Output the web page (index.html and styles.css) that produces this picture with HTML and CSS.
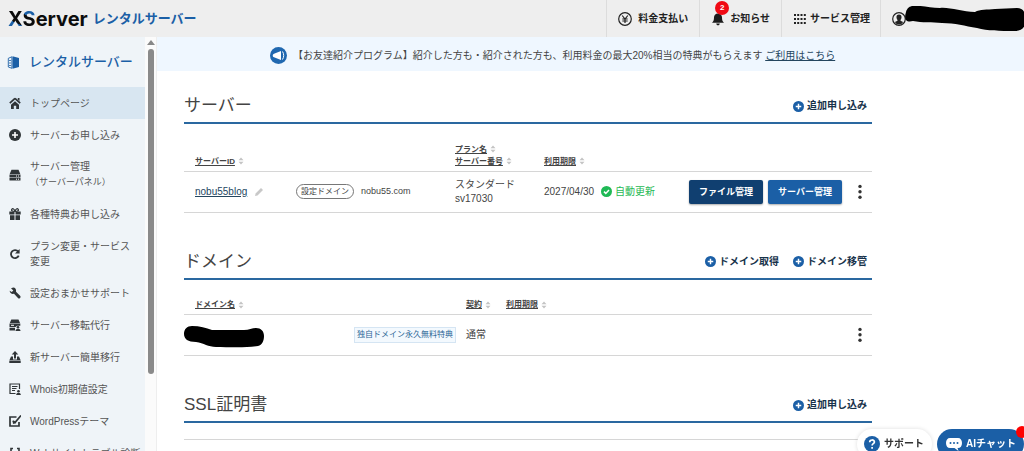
FILE: index.html
```html
<!DOCTYPE html>
<html lang="ja">
<head>
<meta charset="utf-8">
<title>XServer レンタルサーバー</title>
<link rel="stylesheet" href="styles.css">
</head>
<body>
<svg class="defs" aria-hidden="true">
  <symbol id="plus" viewBox="0 0 12 12"><circle cx="6" cy="6" r="6" fill="currentColor"/><path d="M6 3v6M3 6h6" stroke="#fff" stroke-width="1.6"/></symbol>
  <symbol id="sort" viewBox="0 0 6 8"><path d="M.5 3.2 3 .4l2.5 2.8zM.5 4.8 3 7.6l2.5-2.8z" fill="#c4c4c4"/></symbol>
  <symbol id="dots" viewBox="0 0 4 16"><circle cx="2" cy="2.4" r="1.7"/><circle cx="2" cy="7.8" r="1.7"/><circle cx="2" cy="13.2" r="1.7"/></symbol>
</svg>

<header class="topbar">
  <a class="logo" href="#"><span class="logo-name"><span class="logo-x">X</span><span class="logo-s">S</span>erver</span><span class="logo-sub">レンタルサーバー</span></a>
  <nav class="topnav">
    <a class="topnav-item" href="#">
      <svg class="icon-14" viewBox="0 0 14 14" fill="none" stroke="#222"><circle cx="7" cy="7" r="6.3" stroke-width="1.2"/><path d="M4.2 3.5 7 7l2.8-3.5M7 7v4M4.3 7h5.4M4.3 9h5.4" stroke-width="1.2"/></svg>
      <span>料金支払い</span></a>
    <a class="topnav-item notice" href="#">
      <svg class="icon-14" viewBox="0 0 14 14" fill="#1c1c1c"><path d="M7 1.5c2.6 0 4 1.7 4 4 0 2.800.6 3.800 2 5.300H1c1.400-1.500 2-2.500 2-5.300 0-2.300 1.400-4 4-4zM5.200 11.600h3.600a1.800 1.800 0 0 1-3.600 0z"/></svg>
      <span>お知らせ</span><span class="notice-count">2</span></a>
    <a class="topnav-item services" href="#">
      <svg class="icon-12" viewBox="0 0 12 12" fill="#222"><path d="M0 1h2v2H0zM3.200 1h2v2h-2zM6.500 1h2v2h-2zM9.800 1h2v2h-2zM0 5h2v2H0zM3.200 5h2v2h-2zM6.500 5h2v2h-2zM9.800 5h2v2h-2zM0 9h2v2H0zM3.200 9h2v2h-2zM6.500 9h2v2h-2zM9.800 9h2v2h-2z"/></svg>
      <span>サービス管理</span></a>
    <a class="topnav-item account" href="#" aria-label="アカウント">
      <svg class="icon-14" viewBox="0 0 14 14"><circle cx="7" cy="7" r="6.300" fill="none" stroke="#222" stroke-width="1.200"/><path d="M7 2.500c1.800 0 2.700 1.300 2.500 3-.1 1.200-.6 1.900-1 2.400v.9l2.600 1.200C10.200 11.700 8.700 12.500 7 12.500s-3.200-.8-4.100-2.500l2.600-1.200v-.9c-.4-.5-.9-1.200-1-2.400C4.300 3.800 5.200 2.500 7 2.500z" fill="#222"/></svg>
      <svg class="account-mask" viewBox="0 0 120 26"><path d="M8 0C16-1 25 2 35 2c10-1 22 4 35 4 5-3 12-2 20-3l22-1c5 0 8 3 8 8v8c-1 5-5 7-10 7-16 0-27 0-38-3-12-2-22-5-35-5-10-1-20 0-29-2C0 17-1 12 1 6c1-4 4-6 7-6z"/></svg>
    </a>
  </nav>
</header>

<div class="layout">
  <aside class="sidebar">
    <a class="sidebar-title" href="#">
      <svg class="icon-13" viewBox="0 0 12 13"><path d="M5 .3 11.500 2v9L5 12.800z" fill="#1b5fa6"/><path d="M4.400.8v11.500L.8 11V2.300z" fill="none" stroke="#1b5fa6" stroke-width=".9"/><path d="M1.500 4.500h2M1.500 7h2M1.500 9.500h2" stroke="#1b5fa6" stroke-width=".8"/></svg>
      <span>レンタルサーバー</span></a>
    <nav class="menu">
      <a class="menu-item active" href="#"><svg class="icon-12" viewBox="0 0 12 12"><path d="M6 1.300.8 6.200M6 1.300l5.200 4.900" stroke="currentColor" stroke-width="1.700" fill="none"/><path d="M6 4.200 2 7.800V12h2.800V8.700h2.400V12H10V7.800zM8.800 1h1.700v3L8.800 2.500z"/></svg><span>トップページ</span></a>
      <a class="menu-item" href="#"><svg class="icon-12"><use href="#plus"/></svg><span>サーバーお申し込み</span></a>
      <a class="menu-item tall" href="#"><svg class="icon-12" viewBox="0 0 12 12"><path d="M2.500.8h7l1.800 4.200H.7zM.5 5.600h11v2.600H.5zM.5 8.800h11v2.700H.5z"/><path d="M7 7h1M9 7h1M7 10.200h1M9 10.200h1" stroke="#fff"/></svg><span>サーバー管理<small>（サーバーパネル）</small></span></a>
      <a class="menu-item" href="#"><svg class="icon-12" viewBox="0 0 12 12"><path d="M.3 3.500h5.200v3H.3zM6.500 3.500h5.200v3H6.500zM1 7.200h4.500V12H1zM6.500 7.200H11V12H6.500z"/><path d="M6 3.500C3 3.500 2 2.500 2.800 1.300S5.600 1 6 3.500c.4-2.500 2.400-3.400 3.200-2.200S9 3.500 6 3.500z" fill="none" stroke="currentColor" stroke-width="1.200"/></svg><span>各種特典お申し込み</span></a>
      <a class="menu-item tall" href="#"><svg class="icon-12" viewBox="0 0 12 12"><path d="M9.200 3.700a4 4 0 1 0 .5 4" fill="none" stroke="currentColor" stroke-width="1.800"/><path d="M10.600 1v4.600H6z"/></svg><span>プラン変更・サービス変更</span></a>
      <a class="menu-item" href="#"><svg class="icon-12" viewBox="0 0 12 12"><path d="M2 1.200 4.300.6C6.500.8 7.400 2.600 7 4.700l4.300 4.400c.9 1.300-.8 3-2.100 2.100L5 6.800C2.800 7.400.8 6 .6 3.700l2.200 1.400L4.300 3.600z"/></svg><span>設定おまかせサポート</span></a>
      <a class="menu-item" href="#"><svg class="icon-12" viewBox="0 0 12 12"><path d="M2.300.5h7.200l1.500 3.500H.8zM.5 4.600h10.800v2.200H8L6.500 8H.5zM.5 8.700H6v2.800H.5z"/><circle cx="9" cy="8.300" r="1.300"/><path d="M6.500 12c0-3 5-3 5 0z"/><path d="M2 6.300h3" stroke="#fff"/></svg><span>サーバー移転代行</span></a>
      <a class="menu-item" href="#"><svg class="icon-12" viewBox="0 0 12 12"><path d="M6 0 9.300 3.500H7V7.500H5V3.500H2.700zM2 5.500h2v3h4v-3h2L11.500 9H.5zM.3 9.500h11.400V12H.3z"/></svg><span>新サーバー簡単移行</span></a>
      <a class="menu-item" href="#"><svg class="icon-12" viewBox="0 0 12 12"><path d="M6.500 10.500H1V1h9.500v5M3 3.500h5.500M3 5.500h4.500M3 7.500h3" fill="none" stroke="currentColor" stroke-width="1.200"/><circle cx="9.500" cy="8.200" r="1.300"/><path d="M7.200 12c0-3 4.600-3 4.600 0z"/></svg><span>Whois初期値設定</span></a>
      <a class="menu-item" href="#"><svg class="icon-12" viewBox="0 0 12 12"><path d="M7.500 2H1v9h9V7" fill="none" stroke="currentColor" stroke-width="1.700"/><path d="m4 6 2 1.500L12 .5" fill="none" stroke="currentColor" stroke-width="1.700"/><path d="M3.500 5.500 4 9l3-1z"/></svg><span>WordPressテーマ</span></a>
      <a class="menu-item nowrap" href="#"><svg class="icon-12" viewBox="0 0 12 12"><path d="M4 1.500H2v4L1 6.500l1 1V11h2M8 1.500h2v4l1 1-1 1V11H8" fill="none" stroke="currentColor" stroke-width="1.600"/></svg><span>Webサイトトラブル診断</span></a>
    </nav>
  </aside>
  <div class="scrollbar" aria-hidden="true"><span class="scroll-up"></span><span class="scroll-thumb"></span></div>

  <main class="main">
    <div class="banner">
      <svg class="icon-17" viewBox="0 0 17 17"><circle cx="8.500" cy="8.500" r="8.500" fill="#2068b0"/><path d="M11 4v9L4 10.300a1.900 1.900 0 0 1 0-3.600z" fill="#fff"/><path d="M12.500 4.500c1.600 2.500 1.600 5.500 0 8" stroke="#fff" fill="none"/></svg>
      <p>【お友達紹介プログラム】紹介した方も・紹介された方も、利用料金の最大20%相当の特典がもらえます <a href="#">ご利用はこちら</a></p>
    </div>
    <div class="content">
      <section>
        <div class="section-head"><h2>サーバー</h2>
          <a class="add" href="#"><svg class="icon-11"><use href="#plus"/></svg>追加申し込み</a></div>
        <table class="list servers">
          <thead><tr>
            <th class="c-name"><a href="#">サーバーID</a><svg class="sort"><use href="#sort"/></svg></th>
            <th class="c-domain"></th>
            <th class="c-plan"><a href="#">プラン名</a><svg class="sort"><use href="#sort"/></svg><br><a href="#">サーバー番号</a><svg class="sort"><use href="#sort"/></svg></th>
            <th><a href="#">利用期限</a><svg class="sort"><use href="#sort"/></svg></th>
            <th class="c-actions"></th>
          </tr></thead>
          <tbody><tr>
            <td class="c-name"><a class="server-link" href="#">nobu55blog</a><svg class="pencil" viewBox="0 0 10 10"><path d="M1 9l.6-2.500L7 1l2 2-5.500 5.400z" fill="#c8c8c8"/></svg></td>
            <td><span class="pill">設定ドメイン</span><span class="domain">nobu55.com</span></td>
            <td>スタンダード<br>sv17030</td>
            <td><span class="limit">2027/04/30<span class="auto"><svg class="icon-11" viewBox="0 0 11 11"><circle cx="5.500" cy="5.500" r="5.500" fill="#1fb955"/><path d="m3 5.600 1.800 1.800L8 4" fill="none" stroke="#fff" stroke-width="1.500"/></svg>自動更新</span></span></td>
            <td><div class="actions"><button class="btn dark" type="button">ファイル管理</button><button class="btn" type="button">サーバー管理</button><button class="more" type="button" aria-label="メニュー"><svg><use href="#dots"/></svg></button></div></td>
          </tr></tbody>
        </table>
      </section>

      <section>
        <div class="section-head"><h2>ドメイン</h2>
          <a class="add" href="#"><svg class="icon-11"><use href="#plus"/></svg>ドメイン取得</a>
          <a class="add" href="#"><svg class="icon-11"><use href="#plus"/></svg>ドメイン移管</a></div>
        <table class="list domains">
          <thead><tr>
            <th class="c-dname"><a href="#">ドメイン名</a><svg class="sort"><use href="#sort"/></svg></th>
            <th class="c-tag"></th>
            <th class="c-contract"><a href="#">契約</a><svg class="sort"><use href="#sort"/></svg></th>
            <th><a href="#">利用期限</a><svg class="sort"><use href="#sort"/></svg></th>
            <th class="c-more"></th>
          </tr></thead>
          <tbody><tr>
            <td class="masked"><svg class="domain-mask" viewBox="0 0 80 22"><path d="M8 0c8 0 14 2 20 4h32c5 0 8-2 12-2 5 0 8 3 8 8s-2 9-6 10c-12 2-30 1-42 1-8 0-12-4-20-5-8 0-12-3-12-8s3-8 8-8z"/></svg></td>
            <td><span class="tag">独自ドメイン永久無料特典</span></td>
            <td>通常</td>
            <td></td>
            <td><div class="actions"><button class="more" type="button" aria-label="メニュー"><svg><use href="#dots"/></svg></button></div></td>
          </tr></tbody>
        </table>
      </section>

      <section>
        <div class="section-head"><h2>SSL証明書</h2>
          <a class="add" href="#"><svg class="icon-11"><use href="#plus"/></svg>追加申し込み</a></div>
        <div class="ssl-list"></div>
      </section>
    </div>
  </main>
</div>

<div class="float-actions">
  <button class="float support" type="button"><svg class="icon-16" viewBox="0 0 16 16"><circle cx="8" cy="8" r="8" fill="#1b5fa6"/><path d="M5.700 6.300C5.700 3.200 10.400 3.300 10.400 6c0 1.700-2.300 1.700-2.300 3.500M8.100 11v1.800" fill="none" stroke="#fff" stroke-width="1.700"/></svg>サポート</button>
  <button class="float chat" type="button"><svg class="icon-16" viewBox="0 0 16 16"><path d="M4 2h8c2.500 0 4 2 4 5s-1.500 5-4 5h-.5l1 3-4-3H4c-2.500 0-4-2-4-5s1.500-5 4-5z" fill="#fff"/><g fill="#1b5fa6"><circle cx="4.500" cy="7" r="1"/><circle cx="8" cy="7" r="1"/><circle cx="11.500" cy="7" r="1"/></g></svg>AIチャット<span class="chat-dot"></span></button>
</div>
</body>
</html>
```
FILE: styles.css
```css
* { box-sizing: border-box; }

body {
  margin: 0;
  height: 100vh;
  display: flex;
  flex-direction: column;
  overflow: hidden;
  background: #fff;
  color: #444;
  font-family: "Liberation Sans", "Noto Sans CJK JP", sans-serif;
  font-size: 10px;
  line-height: 14px;
}

a { color: inherit; text-decoration: none; }
button { border: 0; padding: 0; font: inherit; cursor: pointer; }
svg { display: block; flex: none; }
.defs { position: absolute; width: 0; height: 0; }
.icon-11 { width: 11px; height: 11px; }
.icon-12 { width: 12px; height: 12px; }
.icon-13 { width: 13px; height: 13px; }
.icon-14 { width: 14px; height: 14px; }
.icon-16 { width: 16px; height: 16px; }
.icon-17 { width: 17px; height: 17px; }

/* Header */
.topbar {
  flex: none;
  height: 37px;
  display: flex;
  justify-content: space-between;
  background: #eee;
}
.logo { display: flex; align-items: center; gap: 5px; padding-left: 8px; font-weight: bold; }
.logo-name { font-family: Inter, sans-serif; font-size: 20px; line-height: 34px; color: #0c0c0c; }
.logo-x, .logo-s { color: transparent; background-clip: text; -webkit-background-clip: text; }
.logo-x { background-image: linear-gradient(25deg, #1b5fa6 38%, #0c0c0c 39%); }
.logo-s { background-image: linear-gradient(205deg, #1b5fa6 42%, #0c0c0c 43%); }
.logo-sub { font-size: 13px; color: #1b5fa6; }
.topnav { display: flex; color: #222; font-weight: bold; }
.topnav-item {
  position: relative;
  display: flex;
  align-items: center;
  gap: 6px;
  padding: 0 11px;
  border-left: 1px solid #dcdcdc;
}
.notice { gap: 5px; }
.services { gap: 4px; padding-left: 12px; padding-right: 10px; }
.notice-count {
  position: absolute;
  left: 15px;
  top: 1px;
  width: 14px;
  height: 14px;
  border-radius: 50%;
  background: #f00a14;
  color: #fff;
  font-size: 8px;
  text-align: center;
}
.account { width: 144px; }
.account-mask { position: absolute; left: 24px; top: 6px; width: 120px; height: 26px; }

/* Sidebar */
.layout { flex: 1; min-height: 0; display: flex; }
.sidebar { flex: none; width: 145px; overflow: hidden; background: #eff4f8; }
.sidebar-title {
  display: flex;
  align-items: center;
  gap: 9px;
  height: 50px;
  padding-left: 7px;
  color: #1b5fa6;
  font-size: 13px;
  font-weight: 500;
}
.menu-item {
  display: flex;
  align-items: center;
  gap: 9px;
  height: 32px;
  padding: 0 12px 0 9px;
  line-height: 15px;
  color: #555;
}
.menu-item svg { color: #303538; fill: #303538; }
.menu-item.tall { height: 47px; }
.menu-item.nowrap { white-space: nowrap; }
.menu-item small { display: block; font-size: 9px; line-height: 16px; }
.active { background: #d8e6f1; }
.scrollbar {
  flex: none;
  width: 12px;
  display: flex;
  flex-direction: column;
  align-items: center;
  gap: 4px;
  padding-top: 3px;
  background: #fbfbfb;
  border-right: 1px solid #eee;
}
.scroll-up { border: 4px solid transparent; border-top: 0; border-bottom: 5px solid #888; }
.scroll-thumb { width: 6px; height: 79%; border-radius: 3px; background: #8a8a8a; }

/* Main column */
.main { flex: 1; min-width: 0; overflow: hidden; }
.banner {
  display: flex;
  align-items: center;
  gap: 6px;
  height: 34px;
  padding: 3px 12px 0 113px;
  background: #eff7ff;
}
.banner p { margin: 0; white-space: nowrap; }
.banner a { color: #24465f; text-decoration: underline; }
.content {
  display: flex;
  flex-direction: column;
  gap: 31px;
  padding: 17px 152px 0 27px;
}
.section-head {
  display: flex;
  align-items: center;
  gap: 14px;
  height: 36px;
  padding: 2px 5px 0 0;
  border-bottom: 2px solid #2a68a0;
}
h2 { flex: 1; margin: 0; font-size: 17px; font-weight: normal; line-height: 24px; }
.add { display: flex; align-items: center; gap: 3px; color: #17324a; font-weight: bold; }
.add svg { color: #1b5fa6; }

.list { width: 100%; table-layout: fixed; border-collapse: collapse; }
.list th {
  height: 35px;
  padding: 0 0 3px;
  vertical-align: bottom;
  text-align: left;
  font-size: 8px;
  line-height: 12px;
  border-bottom: 1px solid #d6d6d6;
}
.servers th { height: 47px; }
.list th a { text-decoration: underline; }
.list td { height: 41px; padding: 0; border-bottom: 1px solid #d6d6d6; }
.list .c-name, .list .c-dname { padding-left: 11px; }
.c-name { width: 112px; }
.c-domain { width: 159px; }
.c-plan { width: 89px; }
.c-actions { width: 190px; }
.c-dname { width: 170px; }
.c-tag { width: 112px; }
.c-contract { width: 40px; }
.c-more { width: 40px; }
.sort { display: inline-block; width: 6px; height: 8px; margin-left: 3px; vertical-align: middle; }
.server-link { color: #24465f; text-decoration: underline; }
.pencil { display: inline-block; width: 10px; height: 10px; margin-left: 7px; vertical-align: middle; }
.pill {
  display: inline-block;
  padding: 0 4px;
  border: 1px solid #777;
  border-radius: 8px;
  font-size: 8px;
  line-height: 13px;
}
.domain { margin-left: 7px; font-size: 9px; }
.limit, .auto { display: flex; align-items: center; white-space: nowrap; }
.limit { gap: 7px; }
.auto { gap: 3px; color: #1fb955; }
.actions { display: flex; align-items: center; justify-content: flex-end; gap: 5px; }
.btn {
  width: 74px;
  height: 24px;
  border-radius: 2px;
  background: #1b5fa6;
  box-shadow: 0 1px 2px #0005;
  color: #fff;
  font-size: 9px;
  font-weight: bold;
}
.dark { background: #103f70; }
.more { display: flex; justify-content: center; width: 14px; margin: 0 5px 0 6px; background: none; }
.more svg { width: 4px; height: 16px; fill: #333; }
.domain-mask { width: 80px; height: 22px; margin-top: 4px; }
.tag {
  display: inline-block;
  padding: 0 2px;
  border: 1px solid #d5e5f3;
  background: #f3f9fe;
  color: #2b6595;
  font-size: 8px;
  line-height: 14px;
}
.ssl-list { height: 17px; border-bottom: 1px solid #d6d6d6; }

/* Floating buttons */
.float-actions { position: fixed; right: 0; bottom: -8px; display: flex; gap: 5px; }
.float {
  position: relative;
  display: flex;
  align-items: center;
  gap: 4px;
  height: 30px;
  padding: 0 8px 0 7px;
  border-radius: 15px;
  font-weight: bold;
}
.support { background: #fff; color: #333; box-shadow: 0 0 4px #0002; }
.chat { padding-left: 9px; background: #1b5fa6; color: #fff; }
.chat-dot {
  position: absolute;
  right: -4px;
  top: -3px;
  width: 12px;
  height: 12px;
  border-radius: 50%;
  background: #f00;
}
```
